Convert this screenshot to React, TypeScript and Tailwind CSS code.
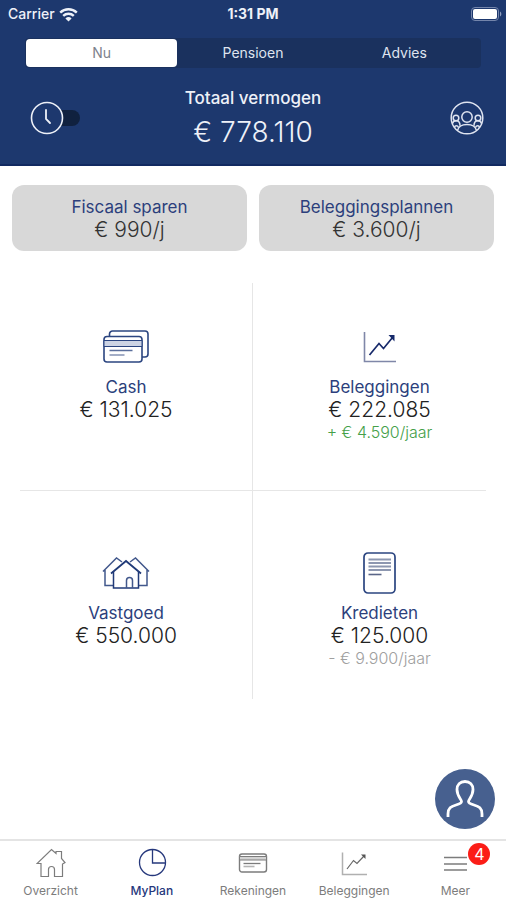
import { useState } from "react";
import type { ReactNode } from "react";
import clsx from "clsx";

interface Asset {
  label: string;
  value: string;
  change?: string;
  changeColor?: string;
  icon: ReactNode;
  cell: string;
}

interface NavItem {
  label: string;
  icon: ReactNode;
  active?: boolean;
  badge?: number;
}

/* Icons */

function WifiIcon() {
  return (
    <svg width="19" height="15" viewBox="0 0 19 15" fill="none" stroke="currentColor" strokeWidth="2.4">
      <path d="M1.2 5.6a12 12 0 0 1 16.6 0" />
      <path d="M4.2 8.9a7.6 7.6 0 0 1 10.6 0" />
      <path d="M9.5 14.6 6.4 11.4a4.5 4.5 0 0 1 6.2 0Z" fill="currentColor" stroke="none" />
    </svg>
  );
}

function BatteryIcon() {
  return (
    <svg width="31" height="14" viewBox="0 0 31 14">
      <rect x="0.5" y="0.5" width="27" height="13" rx="3.5" fill="none" stroke="#7485ab" />
      <rect x="2" y="2" width="24" height="10" rx="2" fill="#fff" />
      <path d="M29 4.5c1.8.8 1.8 4.2 0 5Z" fill="#8f9dbd" />
    </svg>
  );
}

function ClockIcon() {
  return (
    <svg className="relative" width="34" height="34" viewBox="0 0 34 34" fill="none" stroke="#eef1f8" strokeLinecap="round">
      <circle cx="17" cy="17" r="15.5" fill="#1d386e" strokeWidth="1.6" />
      <path d="M16 9v9l4 4" strokeWidth="1.8" />
    </svg>
  );
}

function FamilyIcon() {
  return (
    <svg width="34" height="34" viewBox="0 0 34 34" fill="none" stroke="#dfe4f0" strokeWidth="1.5">
      <circle cx="17" cy="17" r="15.8" />
      <circle cx="17" cy="16" r="5.2" />
      <circle cx="6" cy="17" r="2.8" />
      <circle cx="28" cy="17" r="2.8" />
      <path d="M7.5 29.500c1-4.500 4.500-6 9.500-6s8.500 1.500 9.500 6" />
      <path d="M2.500 22.500c.5-2 2-2.700 3.700-2.700 2.300 0 3.800 1.700 3.800 5M31.500 22.500c-.5-2-2-2.700-3.700-2.700-2.300 0-3.800 1.700-3.800 5" />
      <path d="M4.500 26.500c.5-2.500 3-2.500 4 0M29.500 26.500c-.5-2.500-3-2.500-4 0" />
    </svg>
  );
}

function CashIcon() {
  return (
    <svg width="46" height="34" viewBox="0 0 46 34" fill="none" stroke="#2b4580" strokeWidth="1.6">
      <path d="M6.500 6V4a3 3 0 0 1 3-3h32.500a3 3 0 0 1 3 3v20a3 3 0 0 1-3 3h-3" />
      <rect x="1" y="6.500" width="38" height="25.500" rx="3" />
      <path d="M1 10.500h38v6H1z" fill="#cdd4e4" strokeWidth="1" />
      <path d="M6.500 20.500h23" strokeWidth="1.5" stroke="#5b6f9c" />
      <path d="M6.500 25h15" strokeWidth="2" stroke="#a3adc6" />
    </svg>
  );
}

function ChartIcon() {
  return (
    <svg width="34" height="32" viewBox="0 0 34 32" fill="none" stroke="#16296a">
      <path d="M1.500 1v29.500H33" stroke="#7f87a8" strokeWidth="1.6" />
      <path d="M6.500 24 16 12.500l4.500 5L29.500 6.500" strokeWidth="1.7" />
      <path d="M25.500 4h6v6.500Z" fill="#16296a" stroke="none" />
    </svg>
  );
}

function HousesIcon() {
  return (
    <svg width="48" height="34" viewBox="0 0 48 34" fill="none" stroke="#203a78" strokeWidth="1.5">
      <path d="M1 15.500 14.500 2l5.500 4M3 14V29.500H11" stroke="#42588c" />
      <path d="M47 15.500 33.500 2 28 6M45 14V29.500H37" stroke="#42588c" />
      <path d="M9 17.500 24 5l15 12.500" strokeWidth="1.8" />
      <path d="M11.500 15.500V32h25V15.500" />
      <path d="M24.500 32v-7.500a3 3 0 0 1 6 0V32" stroke="#42588c" />
    </svg>
  );
}

function LoanIcon() {
  return (
    <svg width="33" height="42" viewBox="0 0 33 42" fill="none" stroke="#2b4580">
      <rect x="1" y="1" width="31" height="40" rx="4" strokeWidth="1.7" />
      <path d="M5.500 7.500h22.500M5.500 11h22.500M5.500 14.500h22.500M5.500 18h22.500" stroke="#8d97b0" strokeWidth="2" />
      <path d="M5.500 22.500h13" stroke="#5a6688" strokeWidth="1.6" />
    </svg>
  );
}

function HomeIcon() {
  return (
    <svg width="30" height="30" viewBox="0 0 30 30" fill="none" stroke="currentColor" strokeWidth="1.2">
      <path d="M4 16.500H1L15.500 2.500 20 6.500V4.500h5.500v7L29 15.500l-2.500 1.500v12.500h-8v-7c0-4-6-4-6 0v7H5V16.500Z" />
    </svg>
  );
}

function PieIcon() {
  return (
    <svg width="30" height="30" viewBox="0 0 30 30" fill="none" stroke="currentColor" strokeWidth="1.3">
      <circle cx="15.5" cy="15.5" r="13" />
      <path d="M15.500 2.500v13.500h13" />
    </svg>
  );
}

function CardIcon() {
  return (
    <svg width="30" height="30" viewBox="0 0 30 30" fill="none" stroke="currentColor">
      <rect x="1.500" y="7" width="27" height="18" rx="2.500" strokeWidth="1.4" />
      <path d="M1.500 9.500h27v3.500h-27z" fill="#d3d3d3" strokeWidth="1" />
      <path d="M5.500 16.500h17" strokeWidth="1.3" />
      <path d="M5.500 19.500h11" stroke="#b5b5b5" strokeWidth="1.6" />
    </svg>
  );
}

function GraphIcon() {
  return (
    <svg width="30" height="30" viewBox="0 0 30 30" fill="none" stroke="currentColor">
      <path d="M3.500 5.500v22H28" stroke="#b0b0b0" strokeWidth="1.5" />
      <path d="m8 22 6.500-8.500 3.500 3L25 9" stroke="#666" strokeWidth="1.2" />
      <path d="M22 7.500h4.500v4.500Z" fill="#555" stroke="none" />
    </svg>
  );
}

function MenuIcon() {
  return (
    <svg width="30" height="30" viewBox="0 0 30 30" fill="none" stroke="currentColor" strokeWidth="1.4">
      <path d="M4 10.500h23M4 17h23M4 23h23" />
    </svg>
  );
}

function PersonIcon() {
  return (
    <svg width="38" height="38" viewBox="0 0 38 38" fill="none" stroke="#fff" strokeWidth="2.8">
      <path d="M2 37v-3c0-6 3-7.500 8-9 3-.9 5.500-1.800 5.500-3.500 0-2-4.500-5.500-4.500-12 0-5 3-8 8-8s8 3 8 8c0 6.500-4.500 10-4.500 12 0 1.700 2.500 2.600 5.500 3.500 5 1.500 8 3 8 9v3" />
    </svg>
  );
}

/* Data */

const tabs = ["Nu", "Pensioen", "Advies"];

const plans = [
  { label: "Fiscaal sparen", value: "€ 990/j" },
  { label: "Beleggingsplannen", value: "€ 3.600/j" },
];

const assets: Asset[] = [
  { label: "Cash", value: "€ 131.025", icon: <CashIcon />, cell: "border-r border-b pr-5 pt-10" },
  {
    label: "Beleggingen",
    value: "€ 222.085",
    change: "+ € 4.590/jaar",
    changeColor: "text-[#45a049]",
    icon: <ChartIcon />,
    cell: "border-b pl-5 pt-10",
  },
  { label: "Vastgoed", value: "€ 550.000", icon: <HousesIcon />, cell: "border-r pr-5 pt-[58px]" },
  {
    label: "Kredieten",
    value: "€ 125.000",
    change: "- € 9.900/jaar",
    changeColor: "text-[#a0a0a0]",
    icon: <LoanIcon />,
    cell: "pl-5 pt-[58px]",
  },
];

const navItems: NavItem[] = [
  { label: "Overzicht", icon: <HomeIcon /> },
  { label: "MyPlan", icon: <PieIcon />, active: true },
  { label: "Rekeningen", icon: <CardIcon /> },
  { label: "Beleggingen", icon: <GraphIcon /> },
  { label: "Meer", icon: <MenuIcon />, badge: 4 },
];

function StatusBar() {
  return (
    <div className="grid grid-cols-3 items-center h-7 px-2 text-sm">
      <div className="flex items-center gap-1 font-medium">
        Carrier <WifiIcon />
      </div>
      <div className="text-center font-bold">1:31 PM</div>
      <div className="flex justify-end -mr-1">
        <BatteryIcon />
      </div>
    </div>
  );
}

function AssetCell({ asset }: { asset: Asset }) {
  return (
    <div className={clsx("flex flex-col items-center h-52 border-[#e6e6e6]", asset.cell)}>
      <div className="flex items-center justify-center h-12">{asset.icon}</div>
      <h2 className="mt-1 text-[17px] leading-6 text-[#2c3f7c]">{asset.label}</h2>
      <p className="text-[21px] leading-[22px] font-light text-[#222]">{asset.value}</p>
      {asset.change && <p className={clsx("text-base leading-[22px] font-light", asset.changeColor)}>{asset.change}</p>}
    </div>
  );
}

export default function App() {
  const [tab, setTab] = useState("Nu");

  return (
    <div className="min-h-screen flex flex-col bg-white font-['Inter',sans-serif]">
      <header className="bg-[#1d386e] text-[#eef1f8] border-b-2 border-[#122a61] pb-3">
        <StatusBar />

        {/* Segmented control */}
        <div role="tablist" className="mx-[25px] mt-2.5 p-px grid grid-cols-3 rounded bg-[#1a315e] text-sm">
          {tabs.map((name) => (
            <button
              key={name}
              type="button"
              role="tab"
              aria-selected={tab === name}
              onClick={() => setTab(name)}
              className={clsx("h-7 rounded", tab === name ? "bg-white text-[#7d828c]" : "text-[#dfe4ef]")}
            >
              {name}
            </button>
          ))}
        </div>

        <div className="mt-4 flex items-center justify-between px-[22px]">
          <label className="flex items-center w-16 pl-2 cursor-pointer">
            <input type="checkbox" className="sr-only" aria-label="Tijdlijn" />
            <ClockIcon />
            <span className="-ml-3 h-4 w-7 rounded-r-full bg-[#10213f]" />
          </label>
          <div className="text-center">
            <h1 className="text-[17px] leading-7 font-medium">Totaal vermogen</h1>
            <p className="text-[28px] leading-10 font-light">€ 778.110</p>
          </div>
          <div className="flex justify-end w-16">
            <button type="button" aria-label="Familie">
              <FamilyIcon />
            </button>
          </div>
        </div>
      </header>

      <main className="flex-1">
        <div className="grid grid-cols-2 gap-3 px-3 pt-[19px]">
          {plans.map((plan) => (
            <button key={plan.label} type="button" className="rounded-xl bg-[#d8d8d8] py-2.5 text-center">
              <span className="block text-[17px] leading-6 text-[#2c3f7c]">{plan.label}</span>
              <span className="block text-[21px] leading-[22px] font-light text-[#333]">{plan.value}</span>
            </button>
          ))}
        </div>

        <div className="grid grid-cols-2 px-5 pt-8">
          {assets.map((asset) => (
            <AssetCell key={asset.label} asset={asset} />
          ))}
        </div>
      </main>

      {/* Advisor button, floats above the tab bar */}
      <button
        type="button"
        aria-label="Adviseur"
        className="fixed right-[11px] bottom-[71px] flex items-center justify-center size-[60px] rounded-full bg-[#47608f]"
      >
        <PersonIcon />
      </button>

      <nav className="grid grid-cols-5 border-t-2 border-[#e4e4e4] pt-1.5 pb-px">
        {navItems.map((item) => (
          <a
            key={item.label}
            href="#"
            className={clsx("flex flex-col items-center", item.active ? "text-[#26387c]" : "text-[#7c7c7c]")}
          >
            <span className="relative">
              {item.icon}
              {item.badge && (
                <span className="absolute -top-1 left-7 flex items-center justify-center size-[22px] rounded-full bg-[#fb1d17] text-base text-white">
                  {item.badge}
                </span>
              )}
            </span>
            <span className={clsx("text-xs leading-4 mt-1.5", item.active && "font-medium")}>{item.label}</span>
          </a>
        ))}
      </nav>
    </div>
  );
}
